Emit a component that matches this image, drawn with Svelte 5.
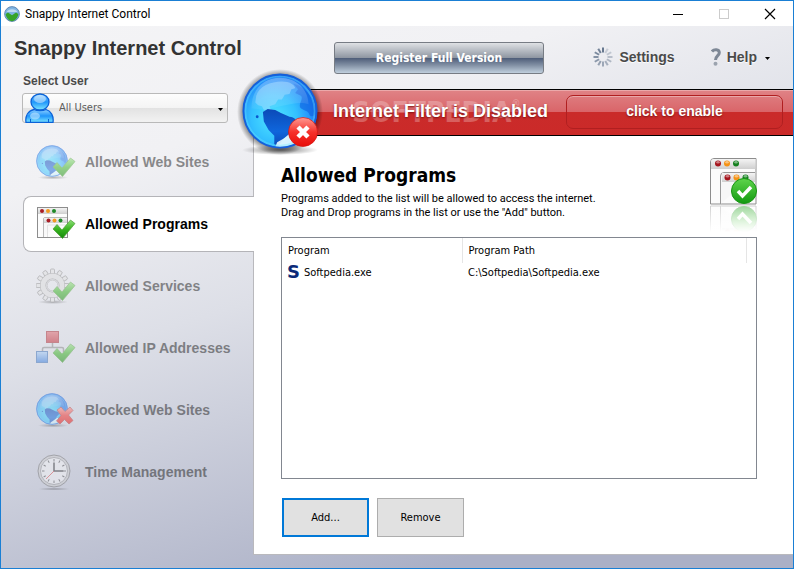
<script>
  let current = $state('programs');
  let user = $state('All Users');

  const sections = [
    { id: 'web', label: 'Allowed Web Sites' },
    { id: 'programs', label: 'Allowed Programs' },
    { id: 'services', label: 'Allowed Services' },
    { id: 'ip', label: 'Allowed IP Addresses' },
    { id: 'blocked', label: 'Blocked Web Sites' },
    { id: 'time', label: 'Time Management' },
  ];

  const programs = [{ name: 'Softpedia.exe', path: 'C:\\Softpedia\\Softpedia.exe' }];

  const spokes = Array.from({ length: 12 }, (_, i) => i);
</script>

{#snippet globe()}
  <circle cx="40" cy="40" r="39" fill="url(#sea)" />
  <path d="M15 24 C18 14 30 9 42 9 C50 9 55 12 56 16 L52 17 L50 22 L45 23 L42 28 L38 28 L35 33 L29 35 L31 40 L23 39 L21 35 L17 34 L14 31 Z" fill="#a5dcff" opacity="0.45" />
  <path d="M54 11 C68 15 77 28 78 40 C77 46 73 47 71 44 C70 39 64 40 61 36 C60 31 65 27 62 24 L56 21 L59 17 Z" fill="#0d5fe0" opacity="0.6" />
  <path d="M22 41 L27 38 L35 39 L41 42 L50 46 C55 46 59 50 57 54 L52 59 L50 65 L44 69 L38 77 L34 75 L34 66 L28 60 L23 51 Z" fill="url(#land)" />
  <path d="M35 78 L37 73 L44 69 L50 64 L55 62 L58 74 L46 78 Z" fill="#e9fbff" opacity="0.9" />
  <circle cx="16" cy="46" r="1.500" fill="#0a55cf" />
  <path d="M10 37 C10 15 25 5 40 5 C57 5 70 17 70 33 C55 27 30 42 10 37 Z" fill="url(#gloss)" />
  <circle cx="40" cy="40" r="36.500" fill="none" stroke="#6cecff" stroke-width="2" opacity="0.35" />
  <circle cx="40" cy="40" r="38.500" fill="none" stroke="#1560da" stroke-width="2" />
{/snippet}

{#snippet tick()}
  <path d="M17 23 L21 18.500 L26 24 L34.500 14 L39 17.500 L26.500 32.500 Z" fill="url(#leaf)" stroke="#4a9e34" stroke-width="0.7" />
{/snippet}

{#snippet windows()}
  <rect x="1.500" y="1.500" width="30" height="30" fill="#fcfcfc" stroke="#8d8d8d" />
  <rect x="2" y="2" width="29" height="6" fill="url(#bar)" />
  <path d="M7.500 31 V13 Q7.500 11.500 9 11.500 H31" fill="#f8f8f8" stroke="#aaa" stroke-width="0.8" />
  <rect x="8" y="12" width="23" height="5" fill="url(#bar)" />
  <path d="M11.500 31 V19 H30" fill="none" stroke="#e2e2e2" />
  <circle cx="6" cy="5" r="2" fill="#a91d25" />
  <circle cx="12" cy="5" r="2" fill="#f39a20" />
  <circle cx="18" cy="5" r="2" fill="#1e8a28" />
  <circle cx="12.500" cy="14.500" r="2" fill="#a91d25" />
  <circle cx="18.500" cy="14.500" r="2" fill="#f39a20" />
  <circle cx="24.500" cy="14.500" r="2" fill="#1e8a28" />
{/snippet}

{#snippet light(x, y, color)}
  <circle cx={x} cy={y} r="3" fill={color} />
  <ellipse cx={x} cy={y - 1.2} rx="1.8" ry="1.2" fill="#fff" opacity="0.45" />
{/snippet}

{#snippet badge()}
  <path d="M0.500 46 V4 Q0.500 0.500 4 0.500 H46 V46 Z" fill="#fbfbfb" stroke="#8d8d8d" />
  <path d="M1 11 V4 Q1 1 4 1 H45.500 V11 Z" fill="url(#bar)" />
  <path d="M10.500 46 V18 Q10.500 14.500 14 14.500 H45" fill="#f7f7f7" stroke="#999" />
  <rect x="12" y="15" width="33" height="9" fill="url(#bar)" />
  {@render light(8, 5.5, '#a5141c')}
  {@render light(17, 5.5, '#f59214')}
  {@render light(26, 5.5, '#13801e')}
  {@render light(17.5, 19.5, '#a5141c')}
  {@render light(26.5, 19.5, '#f59214')}
  {@render light(35.5, 19.5, '#13801e')}
  <circle cx="34" cy="33" r="12.500" fill="url(#green)" stroke="#169412" />
  <path d="M28 33 L32.500 38 L41 29" fill="none" stroke="#fff" stroke-width="3.500" />
{/snippet}

<svg class="defs" width="0" height="0" aria-hidden="true">
  <defs>
    <radialGradient id="sea" cx="0.42" cy="0.6" r="0.62">
      <stop offset="0" stop-color="#4fe6ff" />
      <stop offset="0.5" stop-color="#33c0ff" />
      <stop offset="0.8" stop-color="#2490fa" />
      <stop offset="1" stop-color="#1a72ee" />
    </radialGradient>
    <linearGradient id="land" x2="0" y2="1">
      <stop offset="0" stop-color="#0b4ab8" />
      <stop offset="0.6" stop-color="#0f66dc" />
      <stop offset="1" stop-color="#0b4ab8" />
    </linearGradient>
    <linearGradient id="gloss" x2="0" y2="1">
      <stop offset="0" stop-color="#fff" stop-opacity="0.3" />
      <stop offset="1" stop-color="#fff" stop-opacity="0.05" />
    </linearGradient>
    <linearGradient id="leaf" x2="0" y2="1">
      <stop offset="0" stop-color="#8fe07a" />
      <stop offset="0.5" stop-color="#37b31f" />
      <stop offset="1" stop-color="#178a0c" />
    </linearGradient>
    <linearGradient id="green" x2="0" y2="1">
      <stop offset="0" stop-color="#5fd44c" />
      <stop offset="1" stop-color="#129a10" />
    </linearGradient>
    <linearGradient id="bar" x2="0" y2="1">
      <stop offset="0" stop-color="#f4f4f4" />
      <stop offset="1" stop-color="#cfcfcf" />
    </linearGradient>
    <linearGradient id="red" x2="0" y2="1">
      <stop offset="0" stop-color="#ff9a92" />
      <stop offset="0.5" stop-color="#f6322b" />
      <stop offset="1" stop-color="#e80c08" />
    </linearGradient>
    <linearGradient id="person" x2="0" y2="1">
      <stop offset="0" stop-color="#8fd0ff" />
      <stop offset="0.5" stop-color="#1f95fb" />
      <stop offset="1" stop-color="#7fe8ff" />
    </linearGradient>
    <linearGradient id="redbox" x2="0" y2="1">
      <stop offset="0" stop-color="#e26a70" />
      <stop offset="1" stop-color="#c2232e" />
    </linearGradient>
    <linearGradient id="bluebox" x2="0" y2="1">
      <stop offset="0" stop-color="#a9d0f8" />
      <stop offset="1" stop-color="#2f76dc" />
    </linearGradient>
    <linearGradient id="fade" x2="0" y2="1">
      <stop offset="0" stop-color="#fff" stop-opacity="0.4" />
      <stop offset="1" stop-color="#fff" />
    </linearGradient>
    <radialGradient id="shade">
      <stop offset="0" stop-color="#000" stop-opacity="0.5" />
      <stop offset="1" stop-color="#000" stop-opacity="0" />
    </radialGradient>
    <radialGradient id="halo">
      <stop offset="0.84" stop-color="#000" stop-opacity="0.45" />
      <stop offset="1" stop-color="#000" stop-opacity="0" />
    </radialGradient>
  </defs>
</svg>

<div class="window">
  <header class="titlebar">
    <svg class="app-icon" width="16" height="16" viewBox="0 0 80 80">
      <circle cx="40" cy="40" r="37" fill="#7fb4e2" stroke="#5278a6" stroke-width="4" />
      <path d="M14 30 C20 12 60 12 66 30 Z" fill="#fff" opacity="0.5" />
      <path d="M8 40 L20 32 L40 46 L60 32 L72 40 C70 58 56 74 40 76 C24 74 10 58 8 40 Z" fill="#37a42a" />
    </svg>
    <span class="caption">Snappy Internet Control</span>
    <button class="win-btn" aria-label="Minimize">
      <svg width="12" height="12" viewBox="0 0 12 12"><path d="M1 6.500 H11" stroke="#000" /></svg>
    </button>
    <button class="win-btn" aria-label="Maximize" disabled>
      <svg width="12" height="12" viewBox="0 0 12 12"><rect x="1.500" y="1.500" width="9" height="9" fill="none" stroke="#ccc" /></svg>
    </button>
    <button class="win-btn" aria-label="Close">
      <svg width="12" height="12" viewBox="0 0 12 12"><path d="M1 1 L11 11 M11 1 L1 11" stroke="#000" stroke-width="1.200" /></svg>
    </button>
  </header>

  <div class="shell">
    <aside>
      <h1>Snappy Internet Control</h1>
      <label for="user">Select User</label>
      <div class="user-box">
        <svg class="person" width="30" height="30" viewBox="0 0 30 30">
          <path d="M1 29.500 C0 23 3 18 9 16.500 C12 18 18 18 21 16.500 C26 18 29 23 28 29.500 Z" fill="url(#person)" stroke="#0b62d8" stroke-width="1.300" />
          <ellipse cx="15" cy="9" rx="9" ry="8" fill="url(#person)" stroke="#0b62d8" stroke-width="1.300" />
          <ellipse cx="15" cy="6" rx="6" ry="4" fill="#fff" opacity="0.45" />
          <path d="M5.500 29 V26 M23.500 29 V26" stroke="#0b62d8" />
          <ellipse cx="10" cy="23" rx="5" ry="3.500" fill="#dff6ff" opacity="0.5" />
        </svg>
        <select id="user" bind:value={user}>
          <option>All Users</option>
        </select>
        <svg class="caret" width="5" height="3" viewBox="0 0 5 3"><path d="M0 0 H5 L2.500 3 Z" fill="#000" /></svg>
      </div>

      <nav>
        {#each sections as section}
          <button class="tab" class:active={current === section.id} onclick={() => (current = section.id)}>
            <svg width="40" height="36" viewBox="0 0 40 36">
              {#if section.id === 'web' || section.id === 'blocked'}
                <ellipse cx="17" cy="33.500" rx="15" ry="2" fill="url(#shade)" />
                <g transform="translate(0 1) scale(0.4)">{@render globe()}</g>
                {#if section.id === 'web'}
                  {@render tick()}
                {:else}
                  <path d="M21 18 L25 15 L29 19.500 L34 15 L37 18.500 L32.500 23 L37 28.500 L33 32 L28.500 27.500 L24 32 L20.500 29 L25 23.500 Z" fill="url(#red)" stroke="#b52a2a" stroke-width="0.7" />
                {/if}
              {:else if section.id === 'programs'}
                {@render windows()}
                {@render tick()}
              {:else if section.id === 'services'}
                <ellipse cx="17" cy="34" rx="15" ry="2" fill="url(#shade)" />
                {#each spokes as i}
                  <rect x="14.500" y="1" width="4" height="8" rx="1" fill="#e2e2e2" stroke="#777" stroke-width="0.7" transform="rotate({i * 30} 16.500 17.500)" />
                {/each}
                <circle cx="16.500" cy="17.500" r="9.500" fill="none" stroke="#888" stroke-width="6" />
                <circle cx="16.500" cy="17.500" r="9.500" fill="none" stroke="#dedede" stroke-width="5" />
                <circle cx="16.500" cy="17.500" r="5.500" fill="none" stroke="#aaa" />
                {@render tick()}
              {:else if section.id === 'ip'}
                <path d="M16.500 12 V17.500 M6.500 22 V19 Q6.500 17.500 8 17.500 H26 Q27.500 17.500 27.500 19 V22" fill="none" stroke="#8a8a8a" stroke-width="1.500" />
                <rect x="10.500" y="1.500" width="12" height="11" fill="url(#redbox)" stroke="#ab2a32" />
                <rect x="0.500" y="21.500" width="11" height="11" fill="url(#bluebox)" stroke="#3b70b8" />
                {@render tick()}
              {:else}
                <ellipse cx="18" cy="35" rx="16" ry="1.500" fill="url(#shade)" />
                <circle cx="18" cy="17" r="16" fill="#cfcfcf" stroke="#777" />
                <circle cx="18" cy="17" r="13.500" fill="#f7f7f7" stroke="#999" />
                {#each spokes as i}
                  <path d="M18 5 V7.500" stroke="#555" transform="rotate({i * 30} 18 17)" />
                {/each}
                <path d="M18 8.500 V17 H27.500" fill="none" stroke="#333" stroke-width="1.500" />
                <path d="M18 17 L10 25" stroke="#e03030" stroke-width="0.8" />
              {/if}
            </svg>
            {section.label}
          </button>
        {/each}
      </nav>
    </aside>

    <main>
      <div class="toolbar">
        <button class="register">Register Full Version</button>
        <button class="tool">
          <svg width="20" height="20" viewBox="0 0 20 20">
            {#each spokes as i}
              <path d="M10 0.500 V5.500" stroke="#67788f" stroke-width="2" opacity={i === 0 ? 1 : 0.2 + i * 0.065} transform="rotate({i * 30} 10 10)" />
            {/each}
          </svg>
          Settings
        </button>
        <button class="tool help">
          <svg width="10" height="18" viewBox="0 0 10 18">
            <path d="M1 3.500 C3 1 8.300 1 8.300 4.800 C8.300 7.500 4.500 8 4.500 12" fill="none" stroke="#7e8896" stroke-width="3" />
            <circle cx="4.500" cy="15.800" r="2" fill="#9ba3ae" />
          </svg>
          Help
          <svg class="arrow" width="5" height="3" viewBox="0 0 5 3"><path d="M0 0 H5 L2.500 3 Z" fill="#000" /></svg>
        </button>
      </div>

      <div class="banner">
        <svg class="status" width="96" height="96" viewBox="0 0 96 96">
          <circle cx="47" cy="49" r="43" fill="url(#halo)" />
          <ellipse cx="47" cy="87" rx="38" ry="5" fill="url(#shade)" />
          <g transform="translate(9 10) scale(0.950)">{@render globe()}</g>
          <circle cx="70" cy="69" r="14.500" fill="url(#red)" stroke="#d31410" stroke-width="0.7" />
          <path d="M65 64 L75 74 M75 64 L65 74" stroke="#fff" stroke-width="4.500" />
        </svg>
        <span class="watermark">SOFTPEDIA<sup>®</sup></span>
        <strong>Internet Filter is Disabled</strong>
        <button class="enable">click to enable</button>
      </div>

      <section class="panel">
        <div class="intro">
          <div>
            <h2>Allowed Programs</h2>
            <p>
              Programs added to the list will be allowed to access the internet.<br />
              Drag and Drop programs in the list or use the "Add" button.
            </p>
          </div>
          <svg width="47" height="74" viewBox="0 0 47 74">
            {@render badge()}
            <g class="reflection" transform="translate(0 94) scale(1 -1)">{@render badge()}</g>
            <rect y="47" width="47" height="27" fill="url(#fade)" />
          </svg>
        </div>

        <div class="list">
          <table>
            <thead>
              <tr><th class="name">Program</th><th>Program Path</th><td class="rest"></td></tr>
            </thead>
            <tbody>
              {#each programs as program}
                <tr>
                  <td><div class="file"><span class="s-icon">S</span>{program.name}</div></td>
                  <td>{program.path}</td>
                  <td></td>
                </tr>
              {/each}
            </tbody>
          </table>
        </div>

        <div class="actions">
          <button class="default">Add...</button>
          <button>Remove</button>
        </div>
      </section>
    </main>
  </div>
</div>

<style>
  :global(body) {
    margin: 0;
  }

  * {
    box-sizing: border-box;
  }

  button,
  select {
    font: inherit;
    color: inherit;
  }

  svg {
    flex-shrink: 0;
  }

  .defs {
    position: absolute;
  }

  .window {
    display: flex;
    flex-direction: column;
    min-height: 100vh;
    border: 1px solid #1a7fd4;
    font-family: 'DejaVu Sans Condensed', 'Noto Sans', sans-serif;
    font-size: 11px;
    color: #000;
  }

  .titlebar {
    display: flex;
    align-items: center;
    height: 25px;
    padding-left: 3px;
    background: #fff;
    font-family: Roboto, 'Noto Sans', sans-serif;
    font-size: 12px;
  }

  .caption {
    flex: 1;
    margin-left: 5px;
  }

  .win-btn {
    display: flex;
    align-items: center;
    justify-content: center;
    width: 46px;
    height: 25px;
    padding: 0;
    border: none;
    background: none;
  }

  .shell {
    flex: 1;
    display: grid;
    grid-template-columns: 252px 1fr;
    background: linear-gradient(163deg, #f4f4f6 0%, #f1f1f4 22%, #dddfe7 45%, #abb0c6 86%);
  }

  aside {
    display: flex;
    flex-direction: column;
    font-family: 'Liberation Sans', Arial, sans-serif;
    font-weight: bold;
  }

  h1 {
    margin: 10px 0 0 13px;
    font-size: 20px;
    line-height: 24px;
    color: #333;
    white-space: nowrap;
  }

  label {
    margin: 14px 0 4px 22px;
    font-size: 12px;
    line-height: 15px;
    color: #4a4a4a;
  }

  .user-box {
    position: relative;
    margin: 0 25px 0 21px;
  }

  select {
    display: block;
    width: 100%;
    height: 30px;
    padding: 0 24px 2px 36px;
    appearance: none;
    border: 1px solid #b9b9b9;
    border-radius: 3px;
    background: linear-gradient(#fdfdfd, #f4f4f4 50%, #e2e2e2 50%, #f2f2f2);
    font-family: 'DejaVu Sans Condensed', 'Noto Sans', sans-serif;
    font-size: 11px;
    font-weight: normal;
    color: #5c5c5c;
  }

  .person {
    position: absolute;
    left: 3px;
    bottom: 0;
    pointer-events: none;
  }

  .caret {
    position: absolute;
    right: 5px;
    top: 15px;
    pointer-events: none;
  }

  nav {
    display: flex;
    flex-direction: column;
    gap: 6px;
    margin-top: 11px;
    padding-left: 22px;
  }

  .tab {
    display: flex;
    align-items: center;
    gap: 9px;
    height: 56px;
    padding: 0 0 0 12px;
    border: 1px solid transparent;
    border-right: none;
    border-radius: 8px 0 0 8px;
    background: none;
    font-size: 14px;
    white-space: nowrap;
    opacity: 0.5;
  }

  .tab:not(.active) {
    color: #222;
  }

  .tab.active {
    position: relative;
    margin-right: -1px;
    border-color: #b4b4b8;
    background: #fff;
    opacity: 1;
  }

  main {
    display: flex;
    flex-direction: column;
    padding-bottom: 13px;
  }

  .toolbar {
    display: flex;
    align-items: center;
    height: 63px;
    padding: 0 23px 0 81px;
  }

  .register {
    width: 210px;
    height: 32px;
    margin-right: auto;
    border: 1px solid #777c84;
    border-radius: 3px;
    background: linear-gradient(#dfe1e4, #8d95a1 50%, #4d5c78 50%, #8492a6 75%, #c0cfdd);
    font-size: 12px;
    font-weight: bold;
    color: #fff;
  }

  .tool {
    display: flex;
    align-items: center;
    gap: 6px;
    padding: 0 0 2px;
    border: none;
    background: none;
    font-family: 'Liberation Sans', Arial, sans-serif;
    font-size: 14px;
    font-weight: bold;
    color: #4a4a4a;
    text-shadow: 0 1px 1px #fff;
  }

  .help {
    margin-left: 36px;
  }

  .arrow {
    margin: 4px 0 0 2px;
  }

  .banner {
    position: relative;
    display: flex;
    align-items: center;
    justify-content: space-between;
    height: 47px;
    margin-left: 27px;
    padding: 0 10px 2px 53px;
    border: 1px solid #000;
    border-width: 1px 0;
    background: linear-gradient(#e08386, #d96468 50%, #ca2b2a 50%, #cb2a29);
    box-shadow: inset 0 1px #eba9aa;
    font-family: 'Liberation Sans', Arial, sans-serif;
    color: #fff;
    text-shadow: 0 1px 2px #7a1414;
  }

  .status {
    position: absolute;
    left: -47px;
    top: -27px;
    z-index: 1;
  }

  .watermark {
    position: absolute;
    left: 72px;
    top: 5px;
    font-family: 'DejaVu Sans Condensed', sans-serif;
    font-size: 28px;
    font-weight: bold;
    line-height: 36px;
    color: rgba(255, 255, 255, 0.25);
    text-shadow: none;
  }

  .watermark sup {
    font-size: 10px;
    line-height: 0;
    vertical-align: 15px;
  }

  .banner strong {
    position: relative;
    font-size: 18px;
    white-space: nowrap;
  }

  .enable {
    width: 217px;
    height: 34px;
    padding: 0 0 2px;
    border: 1px solid #b01f20;
    border-radius: 7px;
    background: none;
    box-shadow: inset 0 1px rgba(255, 255, 255, 0.35);
    font-size: 14px;
    font-weight: bold;
    text-shadow: inherit;
  }

  .panel {
    flex: 1;
    display: flex;
    flex-direction: column;
    padding: 22px 36px 17px 27px;
    border: 1px solid #b9b9bd;
    border-width: 0 0 1px 1px;
    background: #fff;
  }

  .intro {
    display: flex;
    justify-content: space-between;
    height: 79px;
  }

  h2 {
    margin: 4px 0;
    font-size: 19px;
    line-height: 26px;
  }

  p {
    margin: 0;
    font-family: Roboto, 'Noto Sans', sans-serif;
    line-height: 14px;
  }

  .reflection {
    opacity: 0.7;
  }

  .list {
    flex: 1;
    border: 1px solid #828790;
    background: #fff;
  }

  table {
    width: 100%;
    border-collapse: collapse;
    table-layout: fixed;
  }

  th {
    height: 25px;
    padding: 0 6px;
    border-right: 1px solid #e5e5e5;
    font-weight: normal;
    text-align: left;
  }

  .name {
    width: 180px;
  }

  .rest {
    width: 10px;
  }

  tbody td {
    height: 18px;
    padding: 0 6px;
  }

  tbody td:first-child {
    padding-left: 5px;
  }

  .file {
    display: flex;
    align-items: center;
    gap: 4px;
  }

  .s-icon {
    font-family: 'DejaVu Sans', sans-serif;
    font-size: 18px;
    font-weight: bold;
    line-height: 16px;
    color: #0b2a78;
  }

  .actions {
    display: flex;
    gap: 8px;
    padding: 19px 0 0 1px;
  }

  .actions button {
    width: 87px;
    height: 39px;
    border: 1px solid #adadad;
    background: #e1e1e1;
  }

  .actions .default {
    border: 2px solid #0078d7;
  }
</style>
